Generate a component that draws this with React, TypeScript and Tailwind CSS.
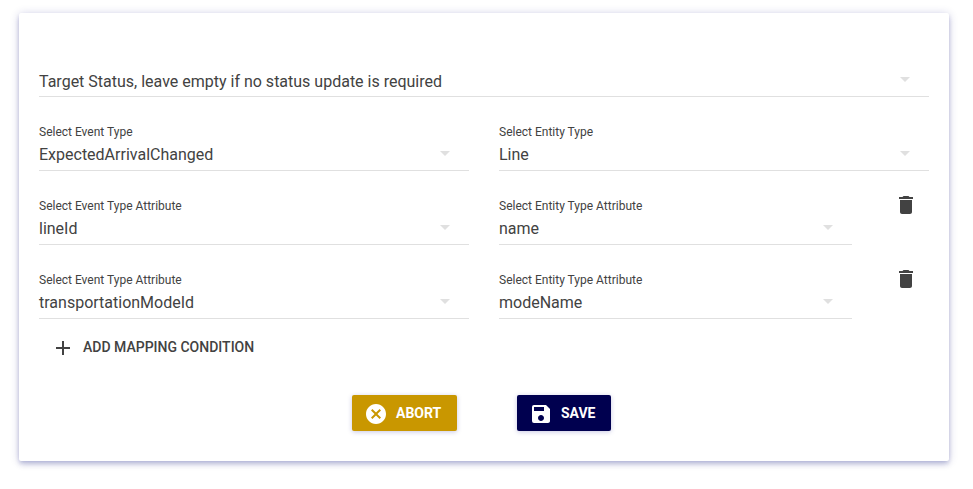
import { MdAdd, MdArrowDropDown, MdCancel, MdDelete, MdSave } from "react-icons/md";

type FieldProps = { label?: string; value: string; className: string };

function Field({ label, value, className }: FieldProps) {
  return (
    <div className={`flex h-[47px] items-end justify-between border-b border-[#e0e0e0] ${className}`}>
      <div className={`flex flex-col ${label ? "pb-[3px]" : "pb-[2px]"}`}>
        {label && <span className="mb-[2px] text-xs leading-[17px]">{label}</span>}
        <span className="text-base leading-6">{value}</span>
      </div>
      <MdArrowDropDown size={24} className="mr-3 mb-[5px] shrink-0 text-[#e0e0e0]" />
    </div>
  );
}

const mappings = [
  { event: "lineId", entity: "name" },
  { event: "transportationModeId", entity: "modeName" },
];

export default function App() {
  return (
    <div className="h-[489px] bg-white pt-[13px] pl-[19px] font-['Roboto',sans-serif] text-[#424242]">
      <main className="flex h-[448px] w-[930px] flex-col rounded-[2px] bg-white px-5 pt-[37px] shadow-[0_2px_4px_-1px_rgba(0,20,120,0.16),0_4px_5px_0_rgba(0,20,120,0.1),0_1px_10px_0_rgba(0,0,130,0.2)]">
        <div className="flex flex-col gap-[27px]">
          <Field value="Target Status, leave empty if no status update is required" className="w-full" />
          <div className="flex gap-[30px]">
            <Field label="Select Event Type" value="ExpectedArrivalChanged" className="w-[430px]" />
            <Field label="Select Entity Type" value="Line" className="w-[430px]" />
          </div>
          {mappings.map((m) => (
            <div key={m.event} className="flex">
              <Field label="Select Event Type Attribute" value={m.event} className="mr-[30px] w-[430px]" />
              <Field label="Select Entity Type Attribute" value={m.entity} className="mr-[42px] w-[353px]" />
              <button aria-label="Delete mapping" className="-mt-[5px] h-6">
                <MdDelete size={24} />
              </button>
            </div>
          ))}
        </div>
        <button className="mt-[17px] ml-3 flex h-6 items-center gap-2 self-start text-sm font-medium">
          <MdAdd size={24} />
          <span className="-mt-[2px]">ADD MAPPING CONDITION</span>
        </button>
        <div className="mt-[35px] ml-[313px] flex gap-[60px] text-sm font-bold text-white">
          <button className="flex h-9 w-[105px] items-center gap-2 rounded-[2px] bg-[#c99700] pl-3 shadow-[0_1px_5px_rgba(0,0,130,0.22)]">
            <MdCancel size={24} className="mt-[2px]" />
            <span>ABORT</span>
          </button>
          <button className="flex h-9 w-[94px] items-center gap-2 rounded-[2px] bg-[#00004f] pl-3 shadow-[0_1px_5px_rgba(0,0,130,0.22)]">
            <MdSave size={24} className="mt-[2px]" />
            <span>SAVE</span>
          </button>
        </div>
      </main>
    </div>
  );
}
